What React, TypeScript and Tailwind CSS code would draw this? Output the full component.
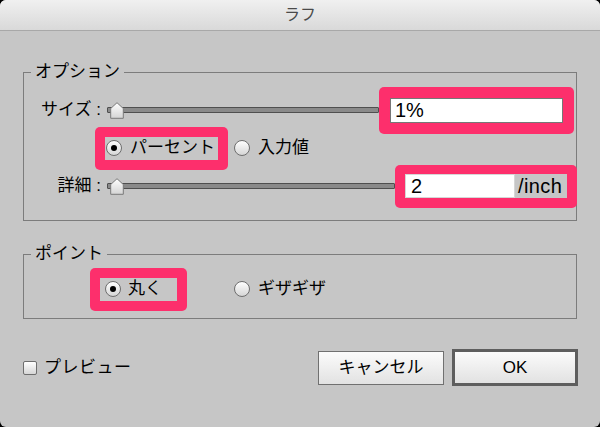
import { useId } from "react";

function Slider() {
  const id = useId();
  return (
    <div className="relative flex h-[17px] flex-1 items-center">
      <div className="h-[6px] w-full rounded-[1px] border border-[#4f4f4f] bg-[#8a8a8a]" />
      <svg className="absolute left-[3px] top-0" width="14" height="17" viewBox="0 0 14 17">
        <defs>
          <linearGradient id={id} x1="0" y1="0" x2="0" y2="1">
            <stop offset="0" stopColor="#ffffff" />
            <stop offset="1" stopColor="#d4d4d4" />
          </linearGradient>
        </defs>
        <path d="M7 0.7 L13.3 6.5 V16.3 H0.7 V6.5 Z" fill={`url(#${id})`} stroke="#7a7a7a" strokeWidth="1" />
      </svg>
    </div>
  );
}

function Radio({ checked }: { checked?: boolean }) {
  return (
    <span className="flex h-[16px] w-[16px] shrink-0 items-center justify-center rounded-full border border-[#6e6e6e] bg-linear-to-b from-white to-[#d6d6d6]">
      {checked && <span className="h-[6px] w-[6px] rounded-full bg-black" />}
    </span>
  );
}

export default function App() {
  return (
    <div className="h-[427px] w-[600px] bg-black font-[family-name:'Liberation_Sans','Noto_Sans_CJK_JP',sans-serif] text-[17px] text-black">
      <div className="flex h-full flex-col overflow-hidden rounded-[6px] bg-[#c6c6c6]">
        <div className="flex h-[31px] shrink-0 items-center justify-center border-b border-[#a8a8a8] bg-linear-to-b from-[#f0f0f0] to-[#d9d9d9] text-[16px] text-[#4a4a4a]">
          ラフ
        </div>

        <fieldset className="mx-[23px] mt-[31px] border border-[#7c7c7c] pb-[15px] pt-[9px]">
          <legend className="ml-[7px] px-[4px] leading-[20px]">オプション</legend>

          <div className="flex h-[38px] items-center pl-[13px] pr-[2px]">
            <span className="w-[70px] shrink-0 pr-[6px] text-right">サイズ :</span>
            <Slider />
            <div className="w-[195px] shrink-0 rounded-[5px] bg-[#fd2f6c] px-[11px] pb-[11px] pt-[11px]">
              <div className="h-[25px] border border-[#777777] bg-white pl-[4px] text-[20px] leading-[23px]">1%</div>
            </div>
          </div>

          <div className="flex h-[38px] items-center pl-[71px]">
            <div className="rounded-[5px] bg-[#fd2f6c] p-[10px]">
              <div className="flex h-[23px] w-[113px] items-center gap-[8px] bg-[#c6c6c6] pl-[1px]">
                <Radio checked />
                <span className="leading-[20px]">パーセント</span>
              </div>
            </div>
            <div className="ml-[6px] flex items-center gap-[8px]">
              <Radio />
              <span className="leading-[20px]">入力値</span>
            </div>
          </div>

          <div className="flex h-[38px] items-center pl-[13px]">
            <span className="w-[70px] shrink-0 pr-[6px] text-right">詳細 :</span>
            <Slider />
            <div className="-mr-px w-[182px] shrink-0 rounded-[5px] bg-[#fd2f6c] px-[10px] pb-[10px] pt-[9px]">
              <div className="flex h-[24px] items-center bg-[#c6c6c6] text-[20px]">
                <div className="h-[24px] w-[110px] border border-[#d6d6d6] bg-white pl-[5px] leading-[22px]">2</div>
                <span className="pl-[3px] leading-[22px] tracking-[0.4px]">/inch</span>
              </div>
            </div>
          </div>
        </fieldset>

        <fieldset className="mx-[23px] mt-[23px] border border-[#7c7c7c] pb-[10px] pt-[6px]">
          <legend className="ml-[7px] px-[4px] leading-[20px]">ポイント</legend>
          <div className="flex h-[38px] items-center pl-[66px]">
            <div className="rounded-[5px] bg-[#fd2f6c] p-[10px]">
              <div className="flex h-[23px] w-[77px] items-center gap-[7px] bg-[#c6c6c6] pl-[5px]">
                <Radio checked />
                <span className="leading-[20px]">丸く</span>
              </div>
            </div>
            <div className="ml-[47px] flex items-center gap-[8px]">
              <Radio />
              <span className="leading-[20px]">ギザギザ</span>
            </div>
          </div>
        </fieldset>

        <div className="mt-[30px] flex items-center justify-between pl-[23px] pr-[22px]">
          <div className="flex items-center gap-[7px]">
            <span className="h-[14px] w-[14px] rounded-[2px] border border-[#6e6e6e] bg-linear-to-b from-white to-[#d6d6d6]" />
            <span className="leading-[20px] tracking-[0.5px]">プレビュー</span>
          </div>
          <div className="flex items-center gap-[8px]">
            <button className="h-[34px] w-[126px] border border-[#707070] bg-linear-to-b from-[#fbfbfb] to-[#e2e2e2] leading-[20px]">
              キャンセル
            </button>
            <button className="h-[37px] w-[126px] border-[3px] border-[#5e5e5e] bg-linear-to-b from-[#fbfbfb] to-[#e2e2e2] leading-[20px]">
              OK
            </button>
          </div>
        </div>
      </div>
    </div>
  );
}
